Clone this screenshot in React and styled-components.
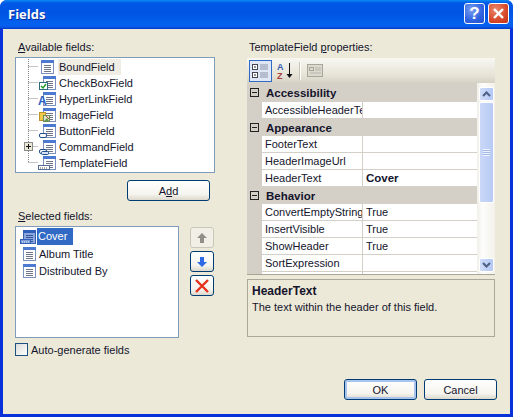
import React from "react";
import styled, { createGlobalStyle, css } from "styled-components";

const Global = createGlobalStyle`
  html, body { margin: 0; padding: 0; background: #fff; }
  * { box-sizing: border-box; }
`;

const FONT = `"Liberation Sans", Arial, sans-serif`;

const Window = styled.div`
  width: 513px;
  height: 417px;
  display: flex;
  flex-direction: column;
  font: 11px ${FONT};
  color: #14142c;
  border-radius: 7px 7px 0 0;
  overflow: hidden;
  background: #0831d9;
`;

const TitleBar = styled.div`
  height: 29px;
  flex: none;
  display: flex;
  align-items: center;
  padding: 0 4px 2px 8px;
  gap: 3px;
  background: linear-gradient(180deg, #0a8cf5 0, #0058e6 10%, #0054e3 45%, #0462f0 85%, #0a5ae8 93%, #0335c8 100%);
`;

const Title = styled.div`
  flex: 1;
  color: #fff;
  font: bold 13px "Open Sans", ${FONT};
  text-shadow: 1px 1px 0 #0a2f9c;
`;

const CaptionButton = styled.div`
  width: 21px;
  height: 21px;
  border: 1px solid #fff;
  border-radius: 3px;
  display: flex;
  align-items: center;
  justify-content: center;
  color: #fff;
  font: bold 17px ${FONT};
  background: ${({ $close }) =>
    $close
      ? "radial-gradient(circle at 35% 30%, #e98a6c, #d8482a 60%, #c0341a)"
      : "radial-gradient(circle at 35% 30%, #7a9ff0, #2f62e0 60%, #2450c8)"};
`;

const Client = styled.div`
  flex: 1;
  margin: 0 3px 3px;
  background: #ece9d8;
  display: flex;
  flex-direction: column;
  justify-content: space-between;
  padding: 11px 13px 14px 12px;
`;

const Main = styled.div`
  display: flex;
  gap: 32px;
`;

const LeftColumn = styled.div`
  width: 200px;
  display: flex;
  flex-direction: column;
`;

const RightColumn = styled.div`
  width: 248px;
  display: flex;
  flex-direction: column;
`;

const Label = styled.div`
  height: ${({ $h }) => $h || 17}px;
  line-height: 14px;
  padding-left: ${({ $indent }) => $indent ?? 3}px;
  margin-top: ${({ $top }) => $top || 0}px;
  white-space: nowrap;
`;

const Box = styled.div`
  border: 1px solid #7f9db9;
  background: #fff;
`;

const TreeBox = styled(Box)`
  height: 116px;
  padding-top: 1px;
`;

const TreeRow = styled.div`
  height: 16px;
  display: flex;
  align-items: center;
`;

const RowLabel = styled.span`
  height: 16px;
  line-height: 16px;
  margin-left: ${({ $gap }) => $gap ?? 2}px;
  padding: 0 6px 0 1px;
  ${({ $state }) =>
    $state === "hover" &&
    css`
      background: #f0eee4;
    `}
  ${({ $state }) =>
    $state === "selected" &&
    css`
      background: #316ac5;
      color: #fff;
      height: 17px;
      line-height: 17px;
    `}
`;

const ButtonBase = styled.div`
  border: 1px solid #003c74;
  border-radius: 3px;
  background: linear-gradient(180deg, #fff 0, #f5f4ee 70%, #dcd8cb 100%);
  display: flex;
  align-items: center;
  justify-content: center;
`;

const AddRow = styled.div`
  display: flex;
  justify-content: flex-end;
  padding-right: 5px;
  margin-top: 7px;
`;

const PushButton = styled(ButtonBase)`
  width: ${({ $w }) => $w || 73}px;
  height: 21px;
  ${({ $default }) =>
    $default &&
    css`
      box-shadow: inset 0 0 0 2px #a9c4ec;
    `}
`;

const ListRow = styled.div`
  display: flex;
  gap: 11px;
`;

const ListBox = styled(Box)`
  width: 164px;
  height: 112px;
  padding: 1px 0 0 4px;
`;

const ListItem = styled.div`
  height: 17px;
  display: flex;
  align-items: center;
`;

const MoveButtons = styled.div`
  display: flex;
  flex-direction: column;
  gap: 3px;
  margin-top: 1px;
`;

const MoveButton = styled(ButtonBase)`
  width: 24px;
  height: 21px;
  ${({ $off }) =>
    $off &&
    css`
      border-color: #c9c7ba;
      background: #f2f0e6;
    `}
`;

const CheckRow = styled.div`
  display: flex;
  align-items: center;
  gap: 3px;
  margin-top: 5px;
`;

const CheckBox = styled.div`
  width: 13px;
  height: 13px;
  border: 1px solid #1c5180;
  background: linear-gradient(135deg, #dcdcd7, #fff);
`;

const Toolbar = styled.div`
  height: 25px;
  display: flex;
  align-items: center;
  gap: 2px;
  padding: 0 2px;
  background: linear-gradient(180deg, #f8f7f2, #e6e3d6 70%, #d6d3c6);
`;

const ToolButton = styled.div`
  width: 23px;
  height: 22px;
  display: flex;
  align-items: center;
  justify-content: center;
  ${({ $on }) =>
    $on &&
    css`
      background: #dfe7f5;
      border: 1px solid #316ac5;
    `}
`;

const ToolSep = styled.div`
  width: 1px;
  height: 18px;
  background: #c8c5b4;
  border-right: 1px solid #fff;
  box-sizing: content-box;
`;

const Grid = styled.div`
  height: 192px;
  display: flex;
  background: #fff;
  border-bottom: 1px solid #a8a594;
  overflow: hidden;
`;

const GridBody = styled.div`
  width: 230px;
  background: #d4d0c8;
  flex: none;
`;

const Category = styled.div`
  height: ${({ $first }) => ($first ? 19 : 17)}px;
  display: flex;
  align-items: center;
  gap: 7px;
  padding-left: 3px;
  font-weight: bold;
  font-size: 11.5px;
  background: #d4d0c8;
`;

const Collapse = styled.span`
  width: 9px;
  height: 9px;
  border: 1px solid #222;
  display: flex;
  align-items: center;
  justify-content: center;
  &::before {
    content: "";
    width: 5px;
    height: 1px;
    background: #222;
  }
`;

const PropRow = styled.div`
  height: 17px;
  margin-left: 15px;
  display: flex;
  background: #fff;
  border-bottom: 1px solid #d4d0c8;
  line-height: 16px;
`;

const PropName = styled.div`
  width: 101px;
  flex: none;
  padding-left: 3px;
  border-right: 1px solid #d4d0c8;
  overflow: hidden;
  white-space: nowrap;
`;

const PropValue = styled.div`
  flex: 1;
  padding-left: 3px;
  font-weight: ${({ $bold }) => ($bold ? "bold" : "normal")};
  font-size: ${({ $bold }) => ($bold ? 11.5 : 11)}px;
`;

const Scrollbar = styled.div`
  flex: 1;
  display: flex;
  flex-direction: column;
  align-items: center;
  padding: 4px 0 2px;
  background: linear-gradient(90deg, #f0efe8, #fdfdfb 30%, #f3f1ea);
`;

const ScrollArrow = styled.div`
  width: 15px;
  height: 14px;
  flex: none;
  border-radius: 2px;
  border: 1px solid #fff;
  background: linear-gradient(90deg, #cfdcf8, #b4c8f6);
  display: flex;
  align-items: center;
  justify-content: center;
`;

const ScrollThumb = styled.div`
  width: 15px;
  height: 101px;
  flex: none;
  margin: 1px 0 auto;
  border-radius: 2px;
  border: 1px solid #fff;
  background: linear-gradient(90deg, #cad8f8, #b8cbf6);
  display: flex;
  align-items: center;
  justify-content: center;
`;

const Grip = styled.div`
  width: 7px;
  height: 7px;
  background: repeating-linear-gradient(180deg, #eef3fe 0 1px, #a5b9e6 1px 2px);
`;

const HelpBox = styled.div`
  height: 58px;
  margin-top: 4px;
  border: 1px solid #aca899;
  padding: 3px 4px;
  line-height: 16px;
`;

const HelpTitle = styled.div`
  font-weight: bold;
  font-size: 12px;
`;

const Footer = styled.div`
  display: flex;
  justify-content: flex-end;
  gap: 7px;
`;

const Doc = ({ x = 5, y = 1, head = "#4c7ad0", line = "#6e7688", edge = "#7c90bd", fill = "#fff" }) => (
  <g>
    <rect x={x + 0.5} y={y + 0.5} width="12" height="13" fill={fill} stroke={edge} />
    <rect x={x} y={y} width="13" height="3" fill={head} />
    {[5, 7, 9, 11].map((d) => (
      <line key={d} x1={x + 3} x2={x + 10} y1={y + d + 0.5} y2={y + d + 0.5} stroke={line} />
    ))}
  </g>
);

const FieldIcon = ({ kind }) => (
  <svg width="18" height="16" viewBox="0 0 18 16">
    <Doc x={kind === "bound" ? 3 : 5} />
    {kind === "check" && (
      <g>
        <rect x="1.5" y="7.5" width="8" height="7" fill="#fff" stroke="#2c6a7c" />
        <path d="M3 11l2 2 3-4" fill="none" stroke="#1e9a28" strokeWidth="1.4" />
      </g>
    )}
    {kind === "link" && (
      <text x="0" y="14" fontFamily={FONT} fontWeight="bold" fontSize="12" fill="#2a62c4">A</text>
    )}
    {kind === "image" && (
      <g>
        <rect x="1.5" y="5.5" width="6" height="8" fill="#f1c94a" stroke="#b8922a" />
        <rect x="5.5" y="8.5" width="6" height="6" fill="#dfe8d0" stroke="#6b8a5a" />
        <path d="M6 14l3-3 2 3" fill="#5f9a4c" />
        <path d="M8 9l3 3" stroke="#c04a3a" />
      </g>
    )}
    {(kind === "button" || kind === "command") && (
      <rect x="1.5" y="10.5" width="7" height="4" rx="1.5" fill="#fff" stroke="#1d4f8c" />
    )}
    {kind === "command" && <rect x="3.5" y="12.5" width="7" height="3" rx="1" fill="#d6e3f6" stroke="#1d4f8c" />}
    {kind === "template" && (
      <g>
        <rect x="0.5" y="10.5" width="11" height="4" fill="#fff" stroke="#566b94" />
        <path d="M2 13h8" stroke="#555" strokeDasharray="1 1" />
      </g>
    )}
  </svg>
);

const SelectedFieldIcon = () => (
  <svg width="16" height="16" viewBox="0 0 16 16">
    <Doc x={3} head="#2f5fb8" fill="#8aa6dc" line="#35579c" edge="#3a62ac" />
    <rect x="0.5" y="10.5" width="10" height="4" fill="#7d9cd8" stroke="#2f5fb8" />
    <path d="M2 13h7" stroke="#e8eefa" strokeDasharray="1 1" />
  </svg>
);

// dotted tree line, the last row stops half way down
const Connector = ({ last, plus }) => (
  <svg width="22" height="16" viewBox="0 0 22 16" style={{ flex: "none" }}>
    <path d={`M12.5 0V${last ? 8 : 16}M12.5 7.5H22`} stroke="#8a8a8a" strokeDasharray="1 1" fill="none" />
    {plus && (
      <g>
        <rect x="8.5" y="3.5" width="8" height="8" fill="#ece9d8" stroke="#8a8a8a" />
        <path d="M10 7.5h5M12.5 5v5" stroke="#111" />
      </g>
    )}
  </svg>
);

const treeItems = [
  { kind: "bound", text: "BoundField", state: "hover" },
  { kind: "check", text: "CheckBoxField" },
  { kind: "link", text: "HyperLinkField" },
  { kind: "image", text: "ImageField" },
  { kind: "button", text: "ButtonField" },
  { kind: "command", text: "CommandField", plus: true },
  { kind: "template", text: "TemplateField", last: true },
];

const gridRows = [
  { cat: "Accessibility", first: true },
  { name: "AccessibleHeaderTe" },
  { cat: "Appearance" },
  { name: "FooterText" },
  { name: "HeaderImageUrl" },
  { name: "HeaderText", value: "Cover", bold: true },
  { cat: "Behavior" },
  { name: "ConvertEmptyString", value: "True" },
  { name: "InsertVisible", value: "True" },
  { name: "ShowHeader", value: "True" },
  { name: "SortExpression" },
  { name: "" },
];

const Chevron = ({ up }) => (
  <svg width="9" height="6" viewBox="0 0 9 6">
    <path d={up ? "M1 5l3.5-3.5L8 5" : "M1 1l3.5 3.5L8 1"} fill="none" stroke="#4d6185" strokeWidth="2" />
  </svg>
);

export default function App() {
  return (
    <Window>
      <Global />
      <TitleBar>
        <Title>Fields</Title>
        <CaptionButton>?</CaptionButton>
        <CaptionButton $close>
          <svg width="13" height="13" viewBox="0 0 13 13">
            <path d="M2 2l9 9M11 2l-9 9" stroke="#fff" strokeWidth="2.4" />
          </svg>
        </CaptionButton>
      </TitleBar>
      <Client>
        <Main>
          <LeftColumn>
            <Label>
              <u>A</u>vailable fields:
            </Label>
            <TreeBox>
              {treeItems.map((item) => (
                <TreeRow key={item.text}>
                  <Connector last={item.last} plus={item.plus} />
                  <FieldIcon kind={item.kind} />
                  <RowLabel $state={item.state}>{item.text}</RowLabel>
                </TreeRow>
              ))}
            </TreeBox>
            <AddRow>
              <PushButton $w={83}>
                <span>
                  A<u>d</u>d
                </span>
              </PushButton>
            </AddRow>
            <Label $top={8}>
              <u>S</u>elected fields:
            </Label>
            <ListRow>
              <ListBox>
                <ListItem>
                  <SelectedFieldIcon />
                  <RowLabel $state="selected" $gap={1}>Cover</RowLabel>
                </ListItem>
                <ListItem>
                  <FieldIcon kind="bound" />
                  <RowLabel $gap={0}>Album Title</RowLabel>
                </ListItem>
                <ListItem>
                  <FieldIcon kind="bound" />
                  <RowLabel $gap={0}>Distributed By</RowLabel>
                </ListItem>
              </ListBox>
              <MoveButtons>
                <MoveButton $off>
                  <svg width="12" height="12" viewBox="0 0 12 12">
                    <path d="M6 1l5 5H8v5H4V6H1z" fill="#8f8f88" />
                  </svg>
                </MoveButton>
                <MoveButton>
                  <svg width="12" height="12" viewBox="0 0 12 12">
                    <path d="M6 11L1 6h3V1h4v5h3z" fill="#2f6ae6" />
                  </svg>
                </MoveButton>
                <MoveButton>
                  <svg width="16" height="16" viewBox="0 0 16 16">
                    <path d="M2 2l12 12M14 2L2 14" stroke="#e8301c" strokeWidth="2.4" />
                  </svg>
                </MoveButton>
              </MoveButtons>
            </ListRow>
            <CheckRow>
              <CheckBox />
              <span>
                Auto-<u>g</u>enerate fields
              </span>
            </CheckRow>
          </LeftColumn>
          <RightColumn>
            <Label $h={18} $indent={2}>
              TemplateField <u>p</u>roperties:
            </Label>
            <Toolbar>
              <ToolButton $on>
                <svg width="17" height="16" viewBox="0 0 17 16">
                  <rect x="0.5" y="1.5" width="5" height="5" fill="#fff" stroke="#445" />
                  <rect x="0.5" y="9.5" width="5" height="5" fill="#fff" stroke="#445" />
                  <path d="M2 4h2M2 12h2" stroke="#223" />
                  <path d="M8 2h8M8 4h8M8 6h8M8 10h8M8 12h8M8 14h8" stroke="#8b93a8" />
                </svg>
              </ToolButton>
              <ToolButton>
                <svg width="20" height="18" viewBox="0 0 20 18">
                  <text x="1" y="8" fontFamily={FONT} fontWeight="bold" fontSize="9" fill="#3a62b0">A</text>
                  <text x="1" y="17" fontFamily={FONT} fontWeight="bold" fontSize="9" fill="#a8403c">Z</text>
                  <path d="M13.5 1v13" stroke="#111" />
                  <path d="M10.5 12h6l-3 4z" fill="#111" />
                </svg>
              </ToolButton>
              <ToolSep />
              <ToolButton>
                <svg width="16" height="15" viewBox="0 0 16 15">
                  <rect x="0.5" y="1.5" width="15" height="12" fill="#dcdad0" stroke="#a8a698" />
                  <rect x="2.5" y="4.5" width="4" height="3" fill="none" stroke="#a8a698" />
                  <path d="M8 5h6M8 7h6M3 10h11" stroke="#b8b6a8" />
                </svg>
              </ToolButton>
            </Toolbar>
            <Grid>
              <GridBody>
                {gridRows.map((row, i) =>
                  row.cat ? (
                    <Category key={i} $first={row.first}>
                      <Collapse />
                      {row.cat}
                    </Category>
                  ) : (
                    <PropRow key={i}>
                      <PropName>{row.name}</PropName>
                      <PropValue $bold={row.bold}>{row.value}</PropValue>
                    </PropRow>
                  )
                )}
              </GridBody>
              <Scrollbar>
                <ScrollArrow>
                  <Chevron up />
                </ScrollArrow>
                <ScrollThumb>
                  <Grip />
                </ScrollThumb>
                <ScrollArrow>
                  <Chevron />
                </ScrollArrow>
              </Scrollbar>
            </Grid>
            <HelpBox>
              <HelpTitle>HeaderText</HelpTitle>
              <div>The text within the header of this field.</div>
            </HelpBox>
          </RightColumn>
        </Main>
        <Footer>
          <PushButton $default>OK</PushButton>
          <PushButton>Cancel</PushButton>
        </Footer>
      </Client>
    </Window>
  );
}
